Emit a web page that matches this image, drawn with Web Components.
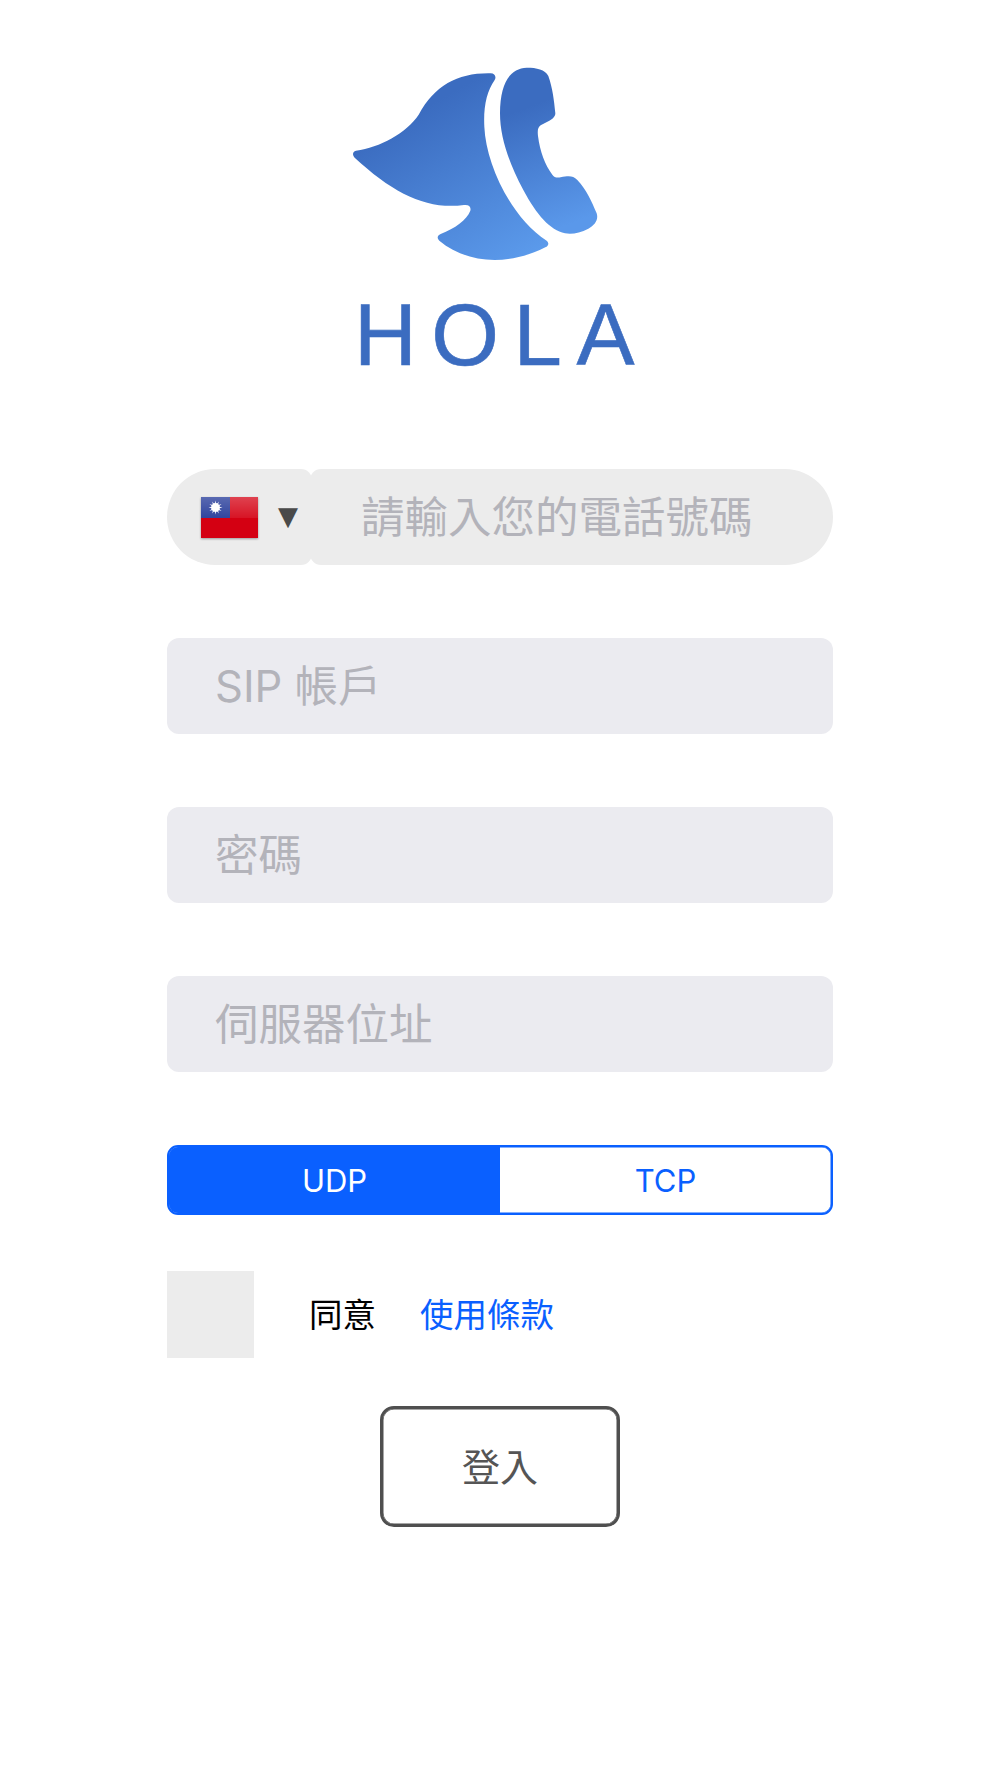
<!DOCTYPE html>
<html lang="zh-Hant">
<head>
<meta charset="utf-8">
<title>HOLA</title>
<style>
  html, body { margin: 0; background: #fff; }
  body { font-family: Inter, "Noto Sans CJK TC", sans-serif; }
</style>
</head>
<body>
<login-page></login-page>

<script>
class HolaLogo extends HTMLElement {
  constructor () {
    super()
    this.attachShadow({ mode: 'open' }).innerHTML = /* html */`
    <style>
      :host { display: block; height: 469px; text-align: center; }
      svg { display: block; height: 200px; margin: 0 auto; padding-top: 62px; width: 300px; }
      .name {
        color: #3b6cc0;
        font-family: "Liberation Sans", sans-serif;
        font-size: 87px;
        -webkit-text-stroke: .6px #3b6cc0;
        letter-spacing: 14.5px;
        line-height: 86px;
        margin-top: 30px;
        padding-left: 3px;
      }
    </style>
    <svg viewBox="60 36 900 600" aria-hidden="true">
      <defs>
        <linearGradient id="g" gradientUnits="userSpaceOnUse" x1="290" y1="170" x2="560" y2="640">
          <stop offset="0" stop-color="#3b6cc0"/>
          <stop offset="1" stop-color="#5b9aeb"/>
        </linearGradient>
        <linearGradient id="p" gradientUnits="userSpaceOnUse" x1="570" y1="180" x2="700" y2="530">
          <stop offset="0" stop-color="#3b6cc0"/>
          <stop offset="1" stop-color="#5a98ea"/>
        </linearGradient>
      </defs>
      <path fill="url(#g)" d="M78 302C150 292 228 250 266 194C315 105 385 68 482 70C494 70 500 80 494 90C470 125 460 170 463 230C468 340 540 500 650 572C658 578 656 588 646 592C530 650 410 640 328 572C320 565 322 556 332 552C375 535 410 510 421 482C424 470 416 463 402 465C290 480 190 430 74 323C66 315 68 304 78 302Z"/>
      <path fill="url(#p)" d="M510 190C510 100 540 55 590 53C620 53 645 58 655 78C668 115 672 150 676 190C676 200 668 207 658 212L632 226C624 232 622 240 624 258C630 305 645 345 667 374C672 382 680 384 692 382C715 378 728 376 742 390C770 420 785 455 800 490C806 510 795 525 775 536C750 550 725 553 705 550C660 540 620 495 580 420C535 335 510 260 510 190Z"/>
    </svg>
    <div class="name">HOLA</div>
    `
  }
}

class FlagPicker extends HTMLElement {
  constructor () {
    super()
    const rays = Array.from({ length: 12 }, (_, i) => {
      return `<polygon points="14.5,3.5 16,10.5 13,10.5" transform="rotate(${i * 30} 14.5 10.5)"/>`
    }).join('')
    this.attachShadow({ mode: 'open' }).innerHTML = /* html */`
    <style>
      :host {
        align-items: center;
        background: #ececec;
        border-radius: 48px 11px 11px 48px;
        box-sizing: border-box;
        display: flex;
        flex: 0 0 145px;
        height: 96px;
        padding-left: 34px;
      }
      svg { display: block; flex: none; filter: drop-shadow(0 1px 1px rgba(0,0,0,.35)); }
      .arrow {
        color: #4a4a4a;
        font-family: "DejaVu Sans", sans-serif;
        font-size: 26px;
        line-height: 26px;
        margin: -3px 0 0 20px;
      }
    </style>
    <svg width="57" height="41" viewBox="0 0 57 41" aria-hidden="true">
      <defs>
        <linearGradient id="gloss" x1="0" y1="0" x2="0" y2="1">
          <stop offset="0" stop-color="#fff" stop-opacity=".26"/>
          <stop offset="1" stop-color="#fff" stop-opacity=".08"/>
        </linearGradient>
      </defs>
      <rect width="57" height="41" fill="#d40012"/>
      <rect width="29" height="21" fill="#1f3596"/>
      <rect width="57" height="21" fill="url(#gloss)"/>
      <g fill="#fff">${rays}<circle cx="14.5" cy="10.5" r="4.4"/></g>
    </svg>
    <span class="arrow">▼</span>
    `
  }
}

class TextField extends HTMLElement {
  constructor () {
    super()
    this.attachShadow({ mode: 'open' }).innerHTML = /* html */`
    <style>
      :host {
        align-items: center;
        background: #ebebf0;
        border-radius: 12px;
        box-sizing: border-box;
        color: #b3b3ba;
        display: flex;
        font-size: 43.5px;
        height: 96px;
        padding: 0 48px 5px;
      }
      :host([phone]) {
        background: #ececec;
        border-radius: 11px 48px 48px 11px;
        flex: 1;
        margin-left: -2px;
        padding-left: 51px;
      }
    </style>
    <slot></slot>
    `
  }
}

class PhoneRow extends HTMLElement {
  constructor () {
    super()
    this.attachShadow({ mode: 'open' }).innerHTML = /* html */`
    <style>
      :host { display: flex; }
    </style>
    <slot></slot>
    `
  }
}

class ProtocolSwitch extends HTMLElement {
  constructor () {
    super()
    this.attachShadow({ mode: 'open' }).innerHTML = /* html */`
    <style>
      :host {
        border: 2px solid #0a60ff;
        border-radius: 11px;
        box-shadow: inset 0 0 0 .5px #0a60ff;
        box-sizing: border-box;
        color: #0a60ff;
        display: grid;
        font-size: 31px;
        grid-template-columns: 1fr 1fr;
        height: 70px;
        overflow: hidden;
      }
      div { align-items: center; display: flex; justify-content: center; }
      .on { background: #0a60ff; color: #fff; }
    </style>
    <div class="on">UDP</div>
    <div>TCP</div>
    `
  }
}

class TermsRow extends HTMLElement {
  constructor () {
    super()
    this.attachShadow({ mode: 'open' }).innerHTML = /* html */`
    <style>
      :host {
        align-items: center;
        display: flex;
        font-size: 33.5px;
      }
      .box { background: #ececec; flex: none; height: 87px; width: 87px; }
      .agree { color: #000; margin: -5px 0 0 55px; }
      a { color: #0a60ff; margin: -5px 0 0 44px; text-decoration: none; }
    </style>
    <div class="box"></div>
    <span class="agree">同意</span>
    <a href="#">使用條款</a>
    `
  }
}

class LoginButton extends HTMLElement {
  constructor () {
    super()
    this.attachShadow({ mode: 'open' }).innerHTML = /* html */`
    <style>
      :host {
        align-items: center;
        border: 3px solid #4f4f4f;
        border-radius: 14px;
        box-shadow: inset 0 0 0 .5px #4f4f4f;
        box-sizing: border-box;
        color: #555;
        display: flex;
        font-size: 38px;
        height: 121px;
        justify-content: center;
        margin: 0 auto;
        padding-bottom: 5px;
        width: 240px;
      }
    </style>
    <slot></slot>
    `
  }
}

class LoginPage extends HTMLElement {
  constructor () {
    super()
    this.attachShadow({ mode: 'open' }).innerHTML = /* html */`
    <style>
      :host { display: block; height: 1778px; }
      form { display: flex; flex-direction: column; gap: 73px; margin: 0 167px; }
      protocol-switch { margin-bottom: -17px; }
      terms-row { margin-bottom: -25px; }
    </style>
    <hola-logo></hola-logo>
    <form>
      <phone-row>
        <flag-picker></flag-picker>
        <text-field phone>請輸入您的電話號碼</text-field>
      </phone-row>
      <text-field>SIP 帳戶</text-field>
      <text-field>密碼</text-field>
      <text-field>伺服器位址</text-field>
      <protocol-switch></protocol-switch>
      <terms-row></terms-row>
      <login-button>登入</login-button>
    </form>
    `
  }
}

customElements.define('hola-logo', HolaLogo)
customElements.define('flag-picker', FlagPicker)
customElements.define('text-field', TextField)
customElements.define('phone-row', PhoneRow)
customElements.define('protocol-switch', ProtocolSwitch)
customElements.define('terms-row', TermsRow)
customElements.define('login-button', LoginButton)
customElements.define('login-page', LoginPage)
</script>
</body>
</html>
